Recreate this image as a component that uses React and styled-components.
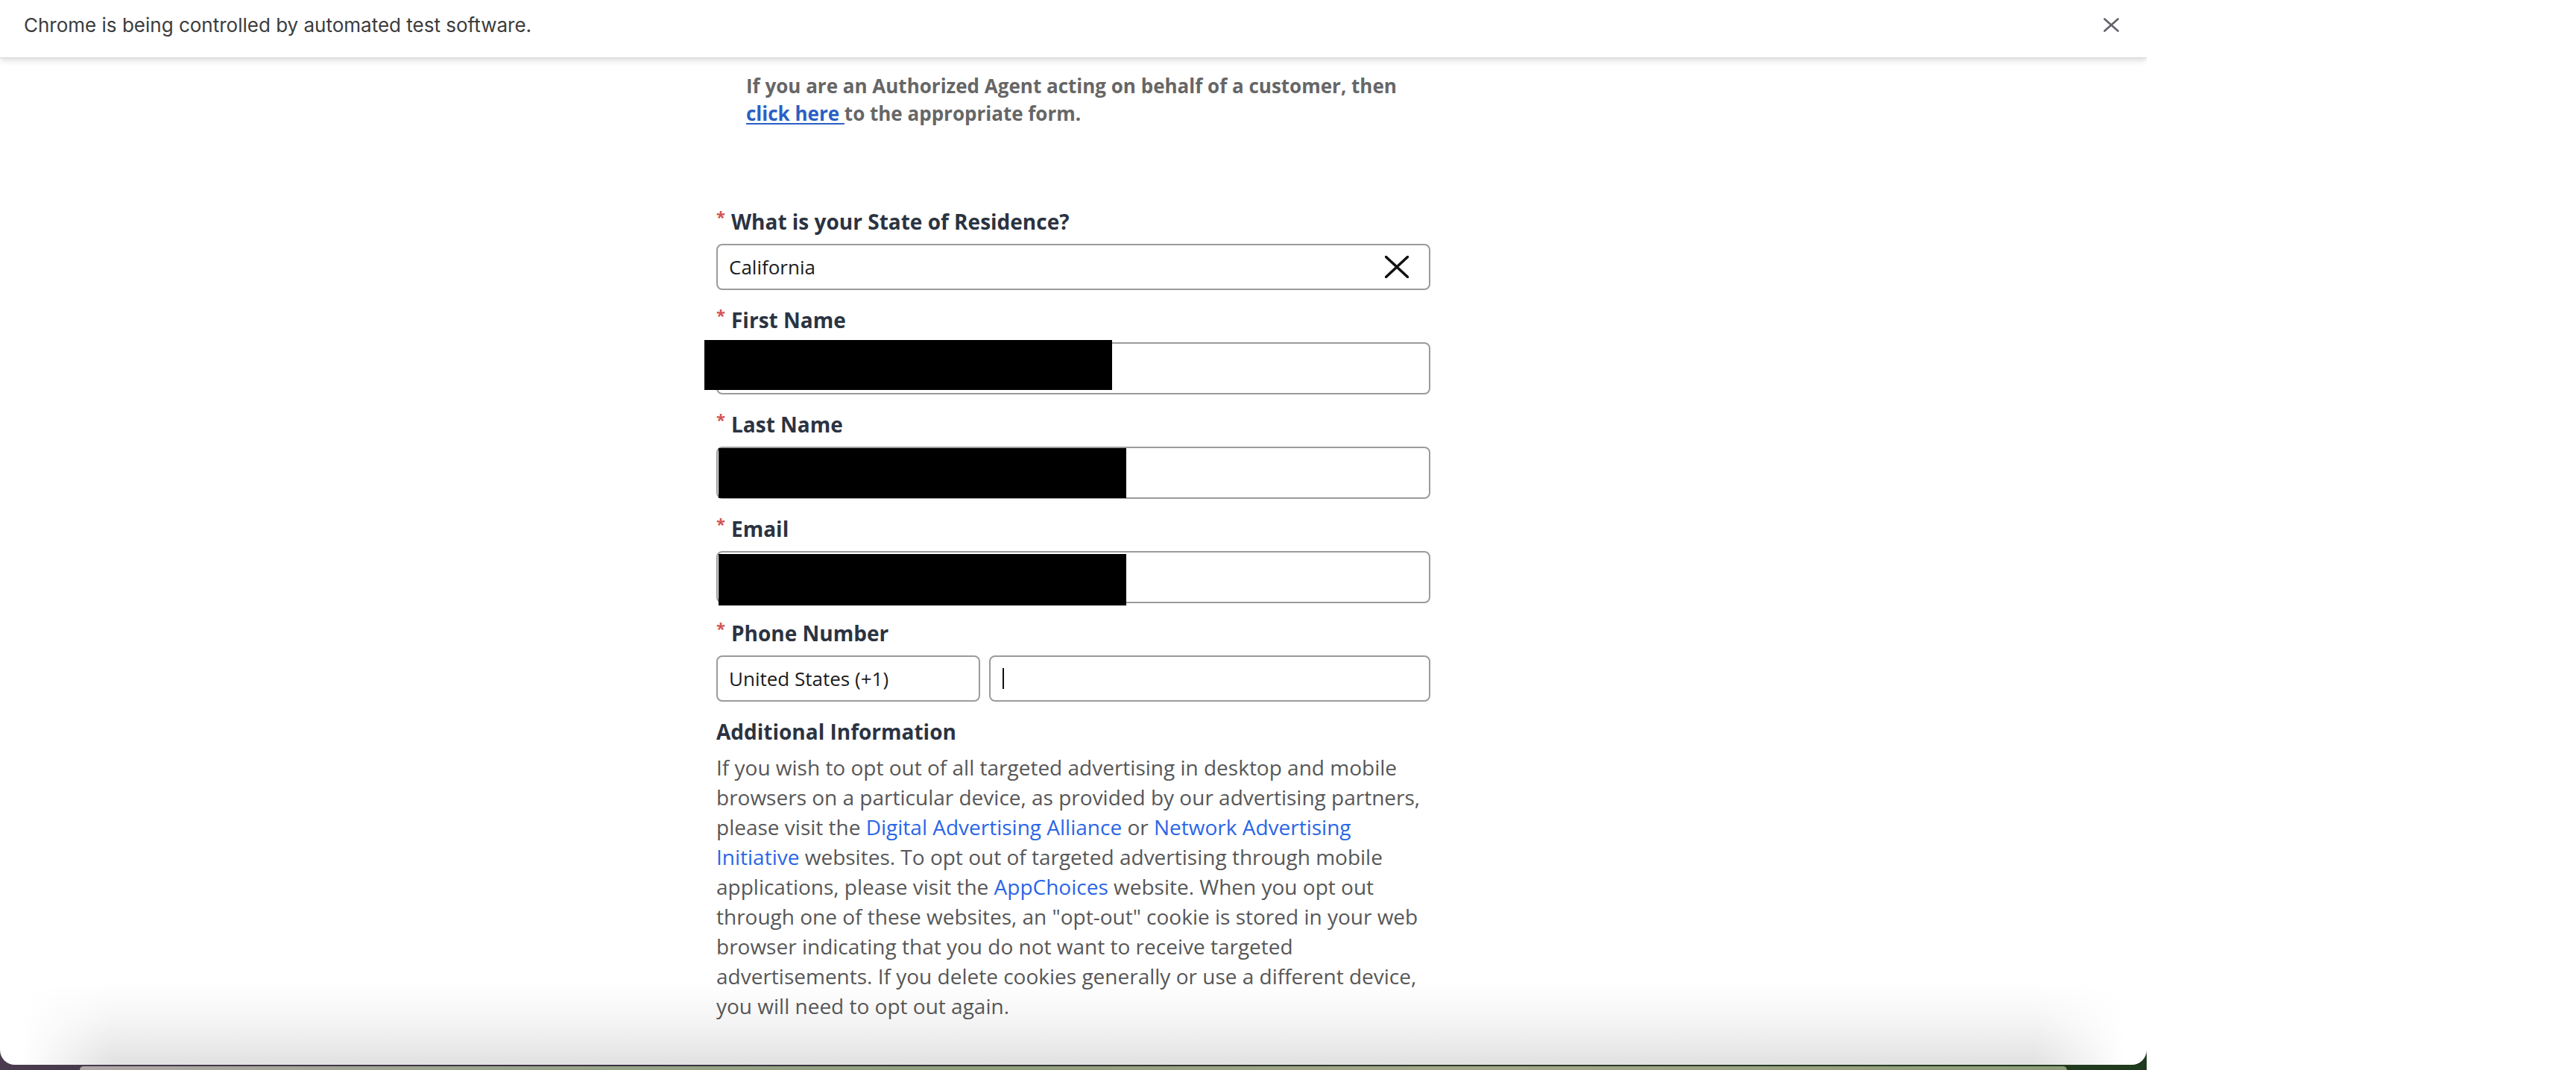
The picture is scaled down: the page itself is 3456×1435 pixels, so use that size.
import React from 'react';
import styled, { createGlobalStyle } from 'styled-components';

const GlobalStyle = createGlobalStyle`
  html, body {
    margin: 0;
    padding: 0;
    background: #fff;
  }
  body {
    width: 3456px;
    height: 1435px;
    overflow: hidden;
  }
  * {
    box-sizing: border-box;
  }
`;

const CloseIcon = ({ w, h, stroke, color }) => (
  <svg width={w} height={h} viewBox={`0 0 ${w} ${h}`} fill='none'>
    <path
      d={`M1.5 1.5 L${w - 1.5} ${h - 1.5} M${w - 1.5} 1.5 L1.5 ${h - 1.5}`}
      stroke={color}
      strokeWidth={stroke}
      strokeLinecap='round'
    />
  </svg>
);

const Field = ({ label, children }) => (
  <FieldWrap>
    <Label>
      <Req>*</Req>
      {label}
    </Label>
    {children}
  </FieldWrap>
);

const App = () => {
  return (
    <>
      <GlobalStyle />
      <Screen>
        <WindowColumn>
          <Window>
            <InfoBar>
              <span>Chrome is being controlled by automated test software.</span>
              <CloseIcon w={21} h={19} stroke={2.6} color='#5f6368' />
            </InfoBar>
            <Page>
              <BottomFade />
              <Column>
                <Intro>
                  If you are an Authorized Agent acting on behalf of a customer,
                  then<IntroLink href='#'> click here </IntroLink>to the
                  appropriate form.
                </Intro>
                <Form>
                  <Field label='What is your State of Residence?'>
                    <Box $h={62}>
                      California
                      <CloseIcon w={32} h={30} stroke={3.6} color='#111' />
                    </Box>
                  </Field>
                  <Field label='First Name'>
                    <Box $h={70}>
                      <Redact $x={-18} $y={-5} $h={67} />
                    </Box>
                  </Field>
                  <Field label='Last Name'>
                    <Box $h={70}>
                      <Redact $x={1} $y={0} $h={67} />
                    </Box>
                  </Field>
                  <Field label='Email'>
                    <Box $h={70}>
                      <Redact $x={1} $y={2} $h={69} />
                    </Box>
                  </Field>
                  <Field label='Phone Number'>
                    <PhoneRow>
                      <Box $h={62} $w={354}>
                        United States (+1)
                      </Box>
                      <Box $h={62} $grow>
                        <Caret />
                      </Box>
                    </PhoneRow>
                  </Field>
                  <div>
                    <Heading>Additional Information</Heading>
                    <Body>
                      If you wish to opt out of all targeted advertising in
                      desktop and mobile browsers on a particular device, as
                      provided by our advertising partners, please visit the{' '}
                      <BodyLink href='#'>Digital Advertising Alliance</BodyLink> or{' '}
                      <BodyLink href='#'>Network Advertising Initiative</BodyLink>{' '}
                      websites. To opt out of targeted advertising through mobile
                      applications, please visit the{' '}
                      <BodyLink href='#'>AppChoices</BodyLink> website. When you
                      opt out through one of these websites, an "opt-out" cookie
                      is stored in your web browser indicating that you do not
                      want to receive targeted advertisements. If you delete
                      cookies generally or use a different device, you will need
                      to opt out again.
                    </Body>
                  </div>
                </Form>
              </Column>
            </Page>
          </Window>
          <Wallpaper>
            <DockBar />
          </Wallpaper>
        </WindowColumn>
        <Desktop />
      </Screen>
    </>
  );
};

const Screen = styled.div`
  display: flex;
  width: 3456px;
  height: 1435px;
  background: #fff;
`;

const WindowColumn = styled.div`
  width: 2880px;
  display: flex;
  flex-direction: column;
  background: linear-gradient(90deg, #4a3b4f 0%, #3a3342 30%, #2f3a2b 70%, #1f3a1c 100%);
`;

const Window = styled.div`
  height: 1428px;
  flex-shrink: 0;
  display: flex;
  flex-direction: column;
  background: #fff;
  border-radius: 0 0 20px 20px;
  overflow: hidden;
`;

const InfoBar = styled.div`
  position: relative;
  z-index: 2;
  height: 78px;
  flex-shrink: 0;
  display: flex;
  align-items: center;
  justify-content: space-between;
  padding: 0 37px 10px 32px;
  font-family: Inter, 'Liberation Sans', sans-serif;
  font-size: 26px;
  line-height: 31px;
  color: #3c3c3c;
  background: #fff;
  border-bottom: 1px solid #d4d4d4;
  box-shadow: 0 3px 8px rgba(0, 0, 0, 0.14);
`;

const Page = styled.main`
  position: relative;
  flex: 1;
  overflow: hidden;
  padding-top: 19px;
`;

const Column = styled.div`
  position: relative;
  z-index: 1;
  width: 958px;
  margin: 0 auto;
  font-family: 'Open Sans', 'Liberation Sans', sans-serif;
`;

const Intro = styled.p`
  margin: 0 0 105px;
  padding: 0 0 0 40px;
  font-size: 26px;
  font-weight: 700;
  line-height: 37px;
  color: #666;
`;

const IntroLink = styled.a`
  color: #2a5fc6;
  text-decoration: underline;
  text-underline-offset: 3px;
`;

const Form = styled.div`
  display: flex;
  flex-direction: column;
  gap: 19px;
`;

const FieldWrap = styled.div`
  display: flex;
  flex-direction: column;
  gap: 9px;
`;

const Label = styled.label`
  display: flex;
  align-items: flex-start;
  font-size: 28px;
  font-weight: 700;
  line-height: 42px;
  color: #2b3341;
`;

const Req = styled.span`
  width: 20px;
  padding-top: 3px;
  font-size: 22px;
  line-height: 22px;
  color: #d4534f;
`;

const Box = styled.div`
  position: relative;
  height: ${(p) => p.$h}px;
  width: ${(p) => (p.$w ? `${p.$w}px` : 'auto')};
  flex: ${(p) => (p.$grow ? 1 : 'none')};
  display: flex;
  align-items: center;
  justify-content: space-between;
  padding: 0 27px 0 15px;
  border: 2px solid #9b9b9b;
  border-radius: 8px;
  background: #fff;
  font-size: 26px;
  color: #1b1b1b;
`;

const Redact = styled.div`
  position: absolute;
  left: ${(p) => p.$x}px;
  top: ${(p) => p.$y}px;
  width: 547px;
  height: ${(p) => p.$h}px;
  background: #000;
`;

const PhoneRow = styled.div`
  display: flex;
  gap: 12px;
`;

const Caret = styled.span`
  width: 2px;
  height: 28px;
  margin-left: 1px;
  background: #111;
`;

const Heading = styled.h3`
  margin: 0 0 7px;
  font-size: 28px;
  font-weight: 700;
  line-height: 42px;
  color: #2b3341;
`;

const Body = styled.p`
  margin: 0;
  font-size: 28px;
  line-height: 40px;
  color: #575757;
`;

const BodyLink = styled.a`
  color: #2b66e6;
  text-decoration: none;
`;

const BottomFade = styled.div`
  position: absolute;
  left: 30px;
  right: 30px;
  bottom: 0;
  height: 110px;
  pointer-events: none;
  background: linear-gradient(180deg, rgba(222, 222, 222, 0) 0%, rgba(222, 222, 222, 0.35) 50%, rgba(222, 222, 222, 0.9) 100%);
  -webkit-mask-image: linear-gradient(90deg, transparent 0, #000 120px, #000 calc(100% - 120px), transparent 100%);
  mask-image: linear-gradient(90deg, transparent 0, #000 120px, #000 calc(100% - 120px), transparent 100%);
`;

const Wallpaper = styled.div`
  flex: 1;
  display: flex;
  padding: 2px 107px 0;
`;

const DockBar = styled.div`
  flex: 1;
  border-radius: 10px 10px 0 0;
  background: linear-gradient(90deg, #b0a7a8 0%, #9aa58c 20%, #8f9f7b 45%, #a4a88a 70%, #8c9c78 100%);
`;

const Desktop = styled.div`
  flex: 1;
  background: #fff;
`;

export default App;
